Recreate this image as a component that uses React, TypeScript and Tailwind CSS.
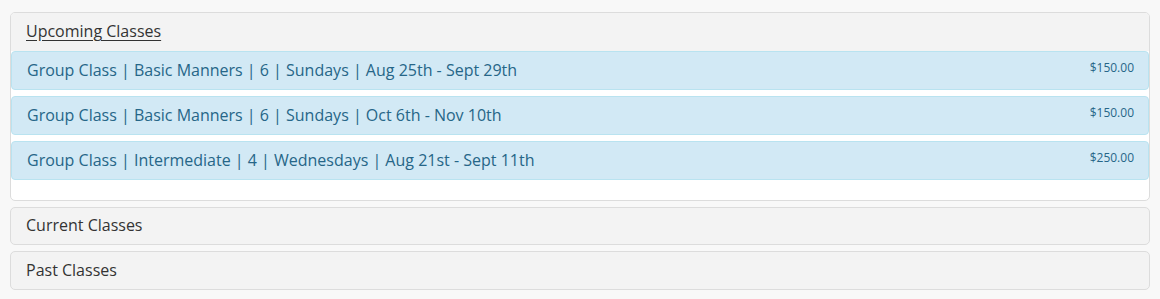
import React from "react";

const items = [
  { t: "Group Class | Basic Manners | 6 | Sundays | Aug 25th - Sept 29th", p: "$150.00" },
  { t: "Group Class | Basic Manners | 6 | Sundays | Oct 6th - Nov 10th", p: "$150.00" },
  { t: "Group Class | Intermediate | 4 | Wednesdays | Aug 21st - Sept 11th", p: "$250.00" },
];

export default function App() {
  return (
    <div className="w-[1160px] h-[299px] bg-[#f8f8f8] pt-[12px] px-[10px] flex flex-col gap-[6px]" style={{ fontFamily: '"Open Sans", sans-serif' }}>
      <div className="border border-[#dcdcdc] rounded-[5px] bg-white overflow-hidden">
        <div className="h-[38px] bg-[#f3f3f3] flex items-center px-[15px] pb-[2px] text-[16px] text-[#333]">
          <span className="underline underline-offset-[3px]">Upcoming Classes</span>
        </div>
        <div className="flex flex-col gap-[6px] pb-[20px]">
          {items.map((it, i) => (
            <div key={i} className="h-[39px] bg-[#d2e9f5] border border-[#b9e3f0] rounded-[4px] flex items-start justify-between pl-[15px] pr-[14px] text-[#266688]">
              <span className="text-[16px] leading-[36px]">{it.t}</span>
              <span className="text-[12px] leading-[12px] pt-[10px]">{it.p}</span>
            </div>
          ))}
        </div>
      </div>
      <div className="h-[38px] border border-[#dcdcdc] rounded-[5px] bg-[#f3f3f3] flex items-center px-[15px] pb-[2px] text-[16px] text-[#333]">
        Current Classes
      </div>
      <div className="h-[39px] border border-[#dcdcdc] rounded-[5px] bg-[#f3f3f3] flex items-center px-[15px] pb-[2px] text-[16px] text-[#333]">
        Past Classes
      </div>
    </div>
  );
}
